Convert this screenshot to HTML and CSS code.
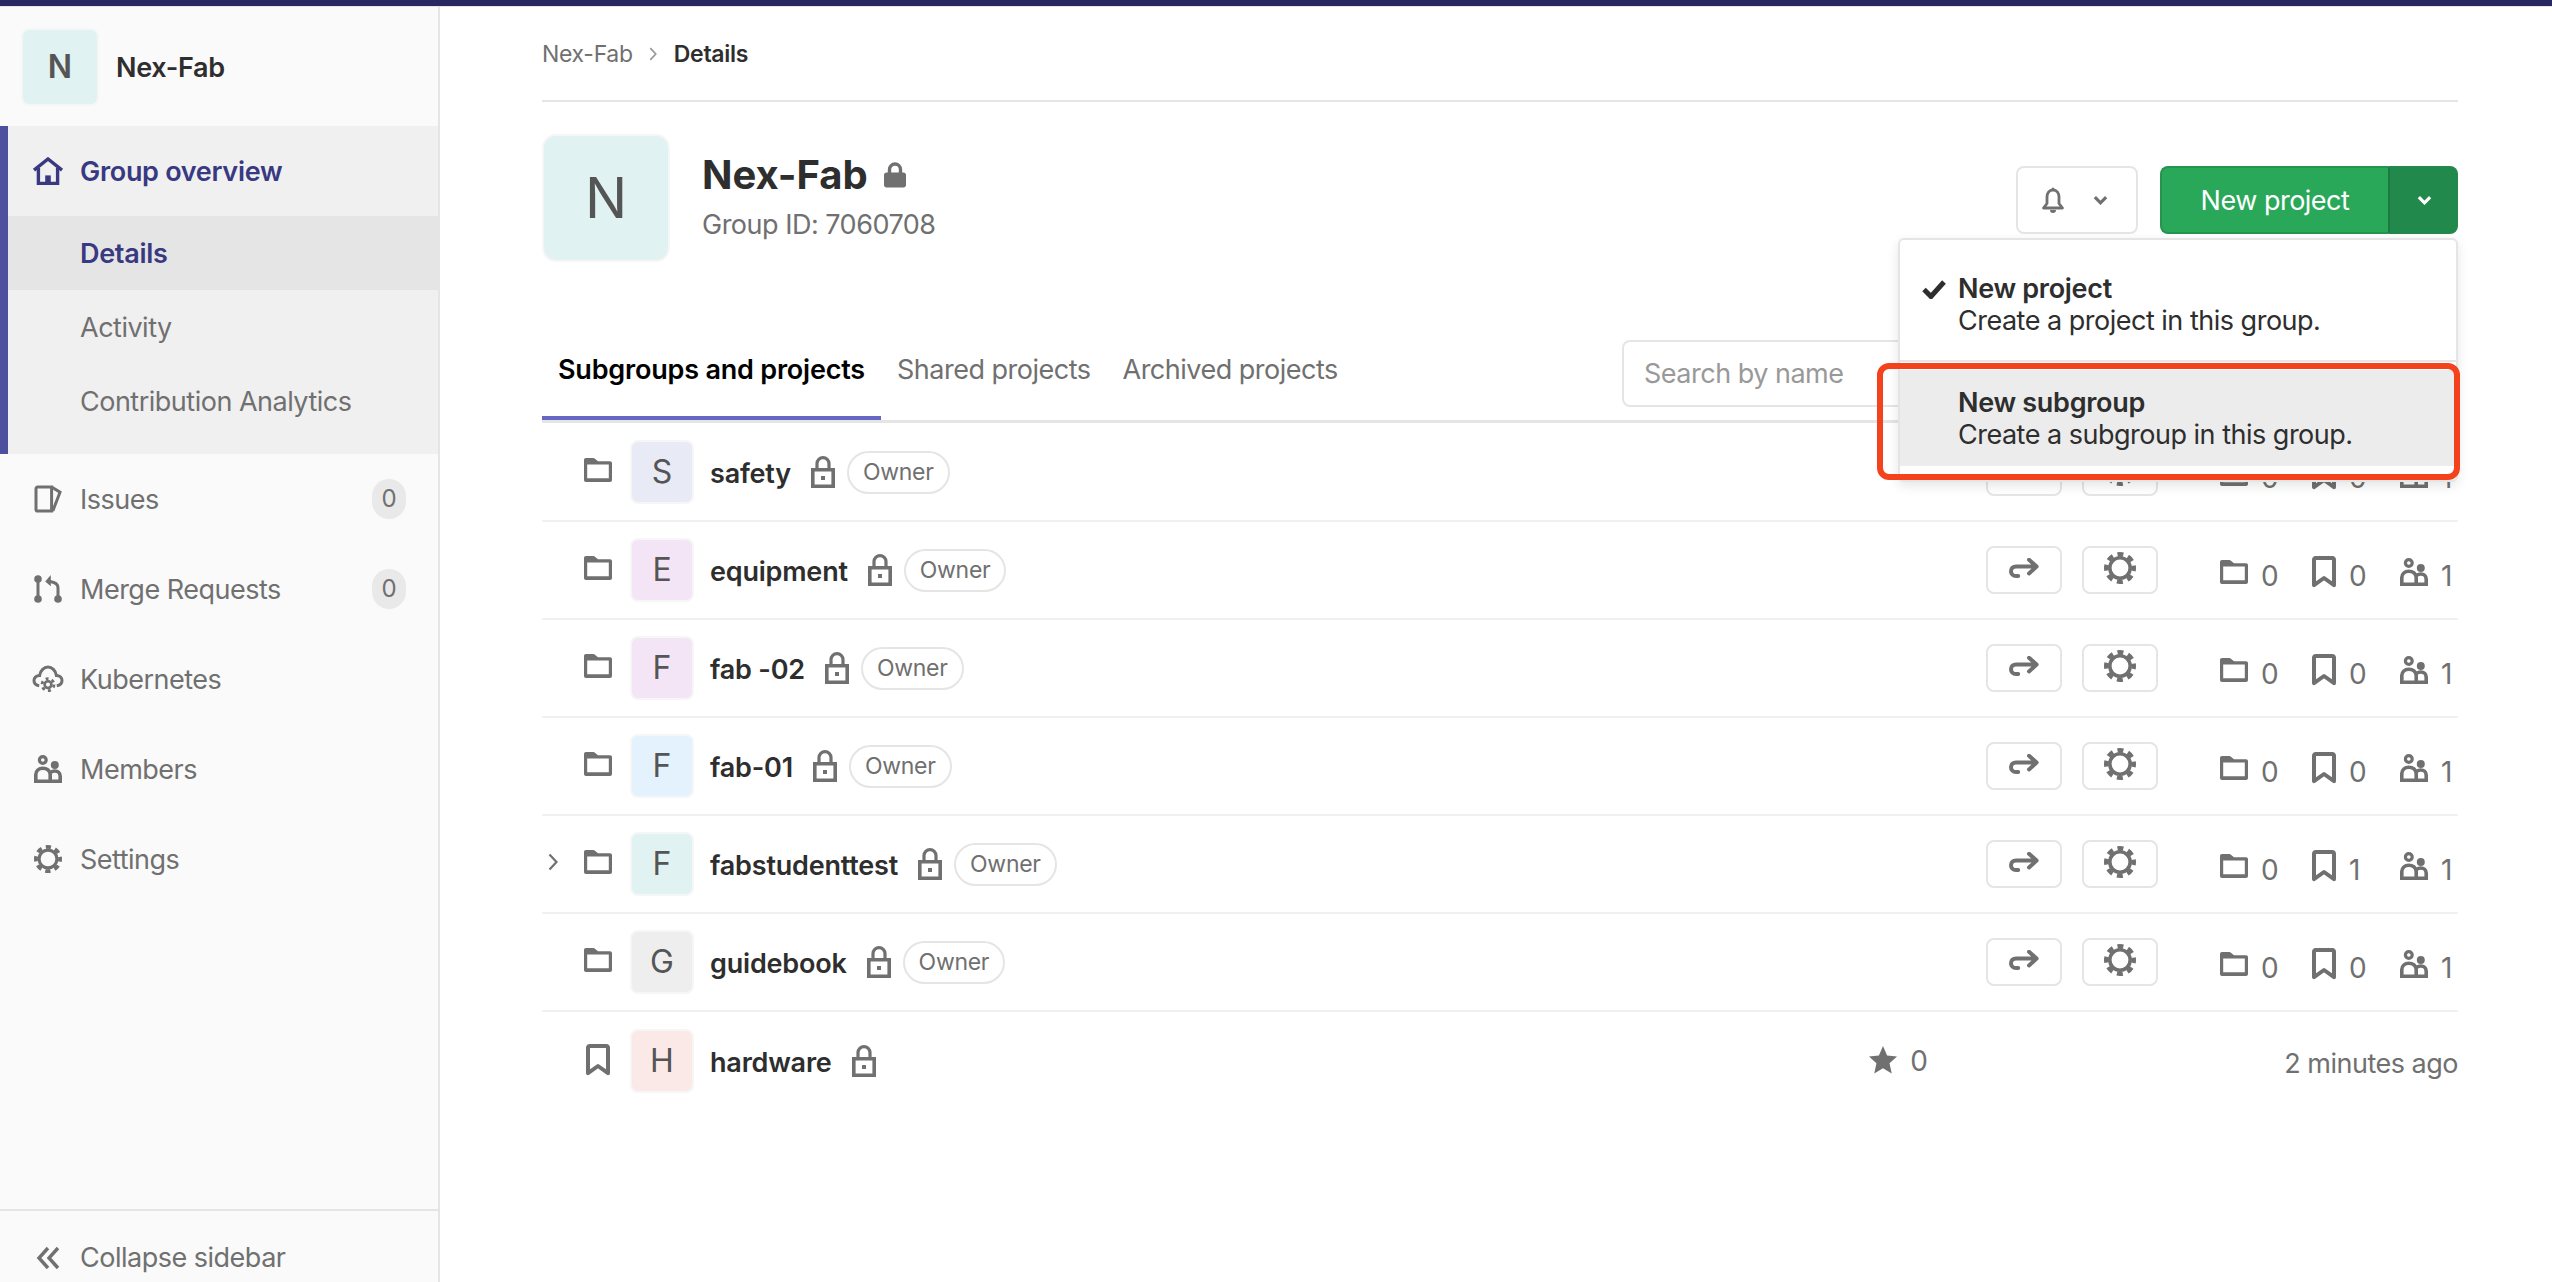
FILE: index.html
```html
<!DOCTYPE html>
<html lang="en">
<head>
  <meta charset="UTF-8">
  <meta name="viewport" content="width=device-width, initial-scale=1.0">
  <title>Nex-Fab - Details</title>
  <link rel="stylesheet" href="styles.css">
</head>
<body>
  <svg class="sprite" xmlns="http://www.w3.org/2000/svg">
    <symbol id="i-home" viewBox="0 0 16 14">
      <path d="M1 6.6 8 1l7 5.6" fill="none" stroke="currentColor" stroke-width="1.7"/>
      <path d="M3.2 5.5v7.7h9.6V5.5" fill="none" stroke="currentColor" stroke-width="1.7"/>
      <path d="M6.6 13V9.2h2.8V13z" fill="currentColor"/>
    </symbol>
    <symbol id="i-issues" viewBox="0 0 14 14">
      <path d="M1.8 1h7v12h-7a.8.8 0 0 1-.8-.8V1.8a.8.8 0 0 1 .8-.8z" fill="none" stroke="currentColor" stroke-width="1.5"/>
      <path d="M8.8 1 13 3.6 9.4 13" fill="none" stroke="currentColor" stroke-width="1.5"/>
    </symbol>
    <symbol id="i-merge" viewBox="0 0 14 14">
      <circle cx="2" cy="2" r="1.9" fill="currentColor"/>
      <circle cx="2" cy="12" r="1.9" fill="currentColor"/>
      <circle cx="12" cy="12" r="1.9" fill="currentColor"/>
      <path d="M2 2v10M12 12V6.4C12 4.6 11 3.6 8 3.2" fill="none" stroke="currentColor" stroke-width="1.5"/>
      <path d="M8.4 0 5.6 3.2l2.8 2.4z" fill="currentColor"/>
    </symbol>
    <symbol id="i-cloud" viewBox="0 0 16 14">
      <path d="M3.6 10.4C1.8 10.2 1 9 1 7.8 1 6.4 2.2 5.2 3.8 5.2 4.2 2.8 6 1 8 1s3.8 1.8 4.2 4.2c1.6 0 2.8 1.2 2.8 2.6 0 1.2-.8 2.4-2.6 2.6" fill="none" stroke="currentColor" stroke-width="1.5"/>
      <circle cx="8" cy="9.8" r="1.7" fill="none" stroke="currentColor" stroke-width="1.3"/>
      <circle cx="8" cy="9.8" r="3" fill="none" stroke="currentColor" stroke-width="1.4" stroke-dasharray="1.5 1.64"/>
    </symbol>
    <symbol id="i-users" viewBox="0 0 14 14">
      <circle cx="4.4" cy="2.5" r="1.7" fill="none" stroke="currentColor" stroke-width="1.6"/>
      <circle cx="10.4" cy="5" r="2" fill="currentColor"/>
      <path d="M.9 13.1V9.8c0-1.9 1.5-3.2 3.5-3.2s3.7 1.3 3.7 3.2v3.3z" fill="none" stroke="currentColor" stroke-width="1.8"/>
      <path d="M8 13.100h5.100V10.600c0-1.600-1.200-2.600-2.700-2.600-.9 0-1.600.3-2.200.7" fill="none" stroke="currentColor" stroke-width="1.800"/>
    </symbol>
    <symbol id="i-gear" viewBox="0 0 16 16">
      <circle cx="8" cy="8" r="5.1" fill="none" stroke="currentColor" stroke-width="1.8"/>
      <circle cx="8" cy="8" r="6.9" fill="none" stroke="currentColor" stroke-width="2.2" stroke-dasharray="3 2.42" stroke-dashoffset="1.5"/>
    </symbol>
    <symbol id="i-folder" viewBox="0 0 14 12">
      <path fill-rule="evenodd" fill="currentColor" d="M1 0h3.600c.4 0 .7.2 1 .5L7 1.600h6c.6 0 1 .4 1 1V11c0 .6-.4 1-1 1H1c-.6 0-1-.4-1-1V1c0-.6.4-1 1-1zm.6 3.200v6.900h10.800V3.200z"/>
    </symbol>
    <symbol id="i-bookmark" viewBox="0 0 12 16">
      <path d="M1.800 1h8.400c.4 0 .8.4.8.8V14.600L6 11 1 14.600V1.800c0-.4.4-.8.8-.8z" fill="none" stroke="currentColor" stroke-width="2" stroke-linejoin="round"/>
    </symbol>
    <symbol id="i-lock" viewBox="0 0 12 16">
      <path d="M3 7V3.800a3 3 0 0 1 6 0V7" fill="none" stroke="currentColor" stroke-width="1.600"/>
      <path d="M.9 6.900h10.200v8.200H.9z" fill="none" stroke="currentColor" stroke-width="1.800"/>
      <path d="M5 10h2v2H5z" fill="currentColor"/>
    </symbol>
    <symbol id="i-lock-solid" viewBox="0 0 22 26">
      <path d="M5.500 11V7.500a5.500 5.500 0 0 1 11 0V11" fill="none" stroke="currentColor" stroke-width="3.400"/>
      <path d="M2.500 10.500h17c1.400 0 2.500 1.100 2.500 2.500v10c0 1.400-1.100 2.500-2.500 2.500h-17C1.100 25.500 0 24.400 0 23V13c0-1.400 1.100-2.500 2.500-2.500z" fill="currentColor"/>
    </symbol>
    <symbol id="i-share" viewBox="0 0 15 10">
      <path d="M4.600 9H3.500C2 9 1 8 1 6.600S2 4.300 3.500 4.300H13.800M10 .9l3.800 3.400L10 7.700" fill="none" stroke="currentColor" stroke-width="2" stroke-linecap="round" stroke-linejoin="round"/>
    </symbol>
    <symbol id="i-chevron" viewBox="0 0 16 10">
      <path d="M2 2l6 6 6-6" fill="none" stroke="currentColor" stroke-width="3.400"/>
    </symbol>
    <symbol id="i-right" viewBox="0 0 10 18">
      <path d="M1.500 1.500 8.500 9l-7 7.500" fill="none" stroke="currentColor" stroke-width="2.200"/>
    </symbol>
    <symbol id="i-collapse" viewBox="0 0 24 24">
      <path d="M12 2 3 12l9 10M22 2l-9 10 9 10" fill="none" stroke="currentColor" stroke-width="3.400"/>
    </symbol>
    <symbol id="i-bell" viewBox="0 0 24 26">
      <path d="M12 3c4 0 6 3 6 7v6.500l3.500 4.500h-19L6 16.500V10c0-4 2-7 6-7z" fill="none" stroke="currentColor" stroke-width="2.800" stroke-linejoin="round"/>
      <path d="M9 23h6a3 3 0 0 1-6 0zM10.500 2a1.500 1.500 0 0 1 3 0v2h-3z" fill="currentColor"/>
    </symbol>
    <symbol id="i-check" viewBox="0 0 24 20">
      <path d="M2 10.500l7 7L22 3" fill="none" stroke="currentColor" stroke-width="5"/>
    </symbol>
    <symbol id="i-star" viewBox="0 0 24 24">
      <path d="M12 0l3.500 8.200 8.500.8-6.400 5.800 1.900 8.700L12 19l-7.500 4.500 1.900-8.700L0 9l8.500-.8z" fill="currentColor"/>
    </symbol>
  </svg>

  <div class="topbar"></div>

  <div class="page">
    <aside class="sidebar">
      <div class="side-head">
        <div class="avatar avatar-side teal">N</div>
        <span class="side-title">Nex-Fab</span>
      </div>

      <div class="side-group">
        <a class="side-link side-link-active"><svg class="side-icon home"><use href="#i-home"/></svg><span>Group overview</span></a>
        <a class="sub-link sub-link-active">Details</a>
        <a class="sub-link">Activity</a>
        <a class="sub-link">Contribution Analytics</a>
      </div>

      <a class="side-link"><svg class="side-icon"><use href="#i-issues"/></svg><span>Issues</span><span class="count">0</span></a>
      <a class="side-link"><svg class="side-icon"><use href="#i-merge"/></svg><span>Merge Requests</span><span class="count">0</span></a>
      <a class="side-link"><svg class="side-icon"><use href="#i-cloud"/></svg><span>Kubernetes</span></a>
      <a class="side-link"><svg class="side-icon"><use href="#i-users"/></svg><span>Members</span></a>
      <a class="side-link"><svg class="side-icon"><use href="#i-gear"/></svg><span>Settings</span></a>

      <a class="collapse"><svg class="collapse-icon"><use href="#i-collapse"/></svg>Collapse sidebar</a>
    </aside>

    <main class="content">
      <nav class="crumbs">
        <a>Nex-Fab</a>
        <svg class="crumb-sep"><use href="#i-right"/></svg>
        <strong>Details</strong>
      </nav>

      <header class="group-head">
        <div class="avatar avatar-big teal">N</div>
        <div class="group-info">
          <h1>Nex-Fab <svg class="group-lock"><use href="#i-lock-solid"/></svg></h1>
          <p>Group ID: 7060708</p>
        </div>
        <div class="group-actions">
          <button class="btn-bell">
            <svg class="bell"><use href="#i-bell"/></svg>
            <svg class="chev"><use href="#i-chevron"/></svg>
          </button>
          <div class="split">
            <button class="split-main">New project</button>
            <button class="split-caret"><svg class="chev"><use href="#i-chevron"/></svg></button>
          </div>

          <div class="menu">
            <div class="menu-item menu-first">
              <svg class="menu-check"><use href="#i-check"/></svg>
              <b>New project</b>
              <span>Create a project in this group.</span>
            </div>
            <div class="menu-line"></div>
            <div class="menu-item menu-hover">
              <b>New subgroup</b>
              <span>Create a subgroup in this group.</span>
            </div>
            <div class="callout"></div>
          </div>
        </div>
      </header>

      <div class="tabs">
        <a class="tab tab-active">Subgroups and projects</a>
        <a class="tab">Shared projects</a>
        <a class="tab">Archived projects</a>
        <input class="search" type="text" placeholder="Search by name">
      </div>

      <ul class="rows">
        <li class="row">
          <span class="toggle"></span>
          <svg class="kind"><use href="#i-folder"/></svg>
          <div class="avatar avatar-row indigo">S</div>
          <a class="name">safety</a>
          <svg class="lock"><use href="#i-lock"/></svg>
          <span class="role">Owner</span>
          <div class="controls">
            <button class="ctl"><svg class="ctl-share"><use href="#i-share"/></svg></button>
            <button class="ctl"><svg class="ctl-gear"><use href="#i-gear"/></svg></button>
          </div>
          <div class="stats">
            <span class="stat s1"><svg class="st-folder"><use href="#i-folder"/></svg>0</span>
            <span class="stat s2"><svg class="st-book"><use href="#i-bookmark"/></svg>0</span>
            <span class="stat s3"><svg class="st-users"><use href="#i-users"/></svg>1</span>
          </div>
        </li>
        <li class="row">
          <span class="toggle"></span>
          <svg class="kind"><use href="#i-folder"/></svg>
          <div class="avatar avatar-row purple">E</div>
          <a class="name">equipment</a>
          <svg class="lock"><use href="#i-lock"/></svg>
          <span class="role">Owner</span>
          <div class="controls">
            <button class="ctl"><svg class="ctl-share"><use href="#i-share"/></svg></button>
            <button class="ctl"><svg class="ctl-gear"><use href="#i-gear"/></svg></button>
          </div>
          <div class="stats">
            <span class="stat s1"><svg class="st-folder"><use href="#i-folder"/></svg>0</span>
            <span class="stat s2"><svg class="st-book"><use href="#i-bookmark"/></svg>0</span>
            <span class="stat s3"><svg class="st-users"><use href="#i-users"/></svg>1</span>
          </div>
        </li>
        <li class="row">
          <span class="toggle"></span>
          <svg class="kind"><use href="#i-folder"/></svg>
          <div class="avatar avatar-row purple">F</div>
          <a class="name">fab -02</a>
          <svg class="lock"><use href="#i-lock"/></svg>
          <span class="role">Owner</span>
          <div class="controls">
            <button class="ctl"><svg class="ctl-share"><use href="#i-share"/></svg></button>
            <button class="ctl"><svg class="ctl-gear"><use href="#i-gear"/></svg></button>
          </div>
          <div class="stats">
            <span class="stat s1"><svg class="st-folder"><use href="#i-folder"/></svg>0</span>
            <span class="stat s2"><svg class="st-book"><use href="#i-bookmark"/></svg>0</span>
            <span class="stat s3"><svg class="st-users"><use href="#i-users"/></svg>1</span>
          </div>
        </li>
        <li class="row">
          <span class="toggle"></span>
          <svg class="kind"><use href="#i-folder"/></svg>
          <div class="avatar avatar-row blue">F</div>
          <a class="name">fab-01</a>
          <svg class="lock"><use href="#i-lock"/></svg>
          <span class="role">Owner</span>
          <div class="controls">
            <button class="ctl"><svg class="ctl-share"><use href="#i-share"/></svg></button>
            <button class="ctl"><svg class="ctl-gear"><use href="#i-gear"/></svg></button>
          </div>
          <div class="stats">
            <span class="stat s1"><svg class="st-folder"><use href="#i-folder"/></svg>0</span>
            <span class="stat s2"><svg class="st-book"><use href="#i-bookmark"/></svg>0</span>
            <span class="stat s3"><svg class="st-users"><use href="#i-users"/></svg>1</span>
          </div>
        </li>
        <li class="row">
          <span class="toggle"><svg class="toggle-icon"><use href="#i-right"/></svg></span>
          <svg class="kind"><use href="#i-folder"/></svg>
          <div class="avatar avatar-row teal">F</div>
          <a class="name">fabstudenttest</a>
          <svg class="lock"><use href="#i-lock"/></svg>
          <span class="role">Owner</span>
          <div class="controls">
            <button class="ctl"><svg class="ctl-share"><use href="#i-share"/></svg></button>
            <button class="ctl"><svg class="ctl-gear"><use href="#i-gear"/></svg></button>
          </div>
          <div class="stats">
            <span class="stat s1"><svg class="st-folder"><use href="#i-folder"/></svg>0</span>
            <span class="stat s2"><svg class="st-book"><use href="#i-bookmark"/></svg>1</span>
            <span class="stat s3"><svg class="st-users"><use href="#i-users"/></svg>1</span>
          </div>
        </li>
        <li class="row">
          <span class="toggle"></span>
          <svg class="kind"><use href="#i-folder"/></svg>
          <div class="avatar avatar-row grey">G</div>
          <a class="name">guidebook</a>
          <svg class="lock"><use href="#i-lock"/></svg>
          <span class="role">Owner</span>
          <div class="controls">
            <button class="ctl"><svg class="ctl-share"><use href="#i-share"/></svg></button>
            <button class="ctl"><svg class="ctl-gear"><use href="#i-gear"/></svg></button>
          </div>
          <div class="stats">
            <span class="stat s1"><svg class="st-folder"><use href="#i-folder"/></svg>0</span>
            <span class="stat s2"><svg class="st-book"><use href="#i-bookmark"/></svg>0</span>
            <span class="stat s3"><svg class="st-users"><use href="#i-users"/></svg>1</span>
          </div>
        </li>
        <li class="row row-last">
          <span class="toggle"></span>
          <svg class="kind kind-book"><use href="#i-bookmark"/></svg>
          <div class="avatar avatar-row rose">H</div>
          <a class="name">hardware</a>
          <svg class="lock"><use href="#i-lock"/></svg>
          <div class="project-meta">
            <span class="stars"><svg class="star"><use href="#i-star"/></svg>0</span>
            <span class="updated">2 minutes ago</span>
          </div>
        </li>
      </ul>
    </main>
  </div>
</body>
</html>
```

FILE: styles.css
```css
* {
  box-sizing: border-box;
}

html,
body {
  height: 100%;
}

body {
  margin: 0;
  overflow: hidden;
  background: #fff;
  color: #2e2e2e;
  font-family: Inter, "Liberation Sans", sans-serif;
  font-size: 27px;
  letter-spacing: -0.5px;
  line-height: 32px;
}

.sprite {
  display: none;
}

svg {
  display: block;
  flex: none;
}

.topbar {
  height: 7px;
  background: #292961;
  border-bottom: 1px solid #e5e5e5;
}

.page {
  display: flex;
  height: 1275px;
}

/* avatars */
.avatar {
  display: flex;
  flex: none;
  align-items: center;
  justify-content: center;
  border: 2px solid #f6f6f6;
  color: #555;
  letter-spacing: 0;
}

.avatar-side {
  width: 78px;
  height: 78px;
  border-radius: 8px;
  font-size: 32px;
  font-weight: 600;
}

.avatar-big {
  width: 128px;
  height: 128px;
  border-radius: 14px;
  font-size: 56px;
}

.avatar-row {
  width: 64px;
  height: 64px;
  border-radius: 8px;
  font-size: 32px;
}

.teal { background: #e0f2f1; }
.indigo { background: #e8eaf6; }
.purple { background: #f3e5f5; }
.blue { background: #e3f2fd; }
.grey { background: #eee; }
.rose { background: #fbe9e7; }

/* sidebar */
.sidebar {
  display: flex;
  flex: none;
  flex-direction: column;
  width: 440px;
  background: #fafafa;
  border-right: 2px solid #e5e5e5;
  color: #707070;
}

.side-head {
  display: flex;
  align-items: center;
  gap: 17px;
  height: 119px;
  padding: 0 0 0 21px;
}

.side-title {
  padding-top: 2px;
  color: #2e2e2e;
  font-weight: 600;
  letter-spacing: -0.3px;
}

.side-group {
  padding-bottom: 16px;
  background: #f0f0f0;
  border-left: 8px solid #4f4f9f;
}

.side-link {
  display: flex;
  align-items: center;
  height: 90px;
  padding: 0 32px;
}

.side-link span:first-of-type {
  padding-top: 2px;
}

.side-group .side-link {
  padding-left: 24px;
}

.side-link-active {
  color: #393982;
  font-weight: 600;
  letter-spacing: -0.3px;
}

.side-icon {
  width: 32px;
  height: 28px;
  margin-right: 16px;
}

.sub-link {
  display: flex;
  align-items: center;
  height: 74px;
  padding: 2px 0 0 72px;
}

.sub-link-active {
  background: #e5e5e5;
  color: #393982;
  font-weight: 600;
  letter-spacing: -0.3px;
}

.side-link .count {
  width: 34px;
  height: 40px;
  margin-left: auto;
  padding: 0;
  border-radius: 17px;
  background: #e9e9e9;
  font-size: 24px;
  letter-spacing: 0;
  line-height: 40px;
  text-align: center;
}

.collapse {
  display: flex;
  align-items: center;
  height: 73px;
  margin-top: auto;
  padding: 22px 0 0 36px;
  border-top: 2px solid #e5e5e5;
}

.collapse-icon {
  width: 24px;
  height: 24px;
  margin-right: 20px;
}

/* main column */
.content {
  flex: 1;
  min-width: 0;
  padding: 0 94px 0 102px;
}

.crumbs {
  display: flex;
  align-items: center;
  height: 95px;
  border-bottom: 2px solid #e5e5e5;
  color: #707070;
  font-size: 23px;
  letter-spacing: -0.3px;
}

.crumbs strong {
  color: #2e2e2e;
  font-weight: 600;
}

.crumb-sep {
  width: 8px;
  height: 14px;
  margin: 0 17px 0 16px;
  color: #999;
}

.group-head {
  display: flex;
  height: 160px;
  margin-top: 32px;
}

.group-info {
  margin-left: 32px;
  padding-top: 17px;
}

.group-info h1 {
  display: flex;
  align-items: center;
  gap: 16px;
  margin: 0;
  font-size: 40px;
  font-weight: 700;
  letter-spacing: 0;
  line-height: 48px;
}

.group-lock {
  width: 22px;
  height: 26px;
  color: #707070;
}

.group-info p {
  margin: 10px 0 0;
  color: #707070;
}

.group-actions {
  position: relative;
  display: flex;
  gap: 22px;
  margin-left: auto;
  padding-top: 32px;
}

button {
  font-family: inherit;
  font-size: 27px;
  letter-spacing: -0.5px;
  cursor: pointer;
}

.btn-bell {
  display: flex;
  align-items: center;
  width: 122px;
  height: 68px;
  padding: 0 0 0 23px;
  background: #fff;
  border: 2px solid #e5e5e5;
  border-radius: 8px;
  color: #707070;
}

.bell {
  width: 24px;
  height: 26px;
  margin-right: 28px;
}

.chev {
  width: 15px;
  height: 10px;
}

.split {
  display: flex;
  height: 68px;
}

.split-main {
  width: 228px;
  background: #2aa85a;
  border: 2px solid #24944f;
  border-right: 0;
  border-radius: 8px 0 0 8px;
  color: #fff;
}

.split-caret {
  display: flex;
  align-items: center;
  justify-content: center;
  width: 70px;
  padding: 0 0 0 2px;
  background: #21894b;
  border: 2px solid #21894b;
  border-left-color: #1b7a41;
  border-radius: 0 8px 8px 0;
  color: #fff;
}

.menu {
  position: absolute;
  top: 104px;
  right: 0;
  z-index: 10;
  width: 560px;
  height: 244px;
  padding-top: 8px;
  background: #fff;
  border: 2px solid #e5e5e5;
  border-radius: 6px;
  box-shadow: 0 4px 12px rgba(0, 0, 0, 0.1);
}

.menu-item {
  position: relative;
  display: flex;
  flex-direction: column;
  padding: 25px 8px 23px 58px;
}

.menu-first {
  height: 112px;
}

.menu-item b {
  font-weight: 600;
  letter-spacing: -0.3px;
}

.menu-line {
  height: 2px;
  margin-bottom: 8px;
  background: #e5e5e5;
}

.menu-hover {
  height: 96px;
  padding-top: 17px;
  padding-bottom: 15px;
  background: #ececec;
}

.menu-check {
  position: absolute;
  top: 31px;
  left: 22px;
  width: 24px;
  height: 20px;
  color: #2e2e2e;
}

.callout {
  position: absolute;
  top: 123px;
  left: -23px;
  width: 583px;
  height: 117px;
  border: 6px solid #f4421d;
  border-radius: 12px;
  pointer-events: none;
}

/* tabs */
.tabs {
  display: flex;
  align-items: flex-end;
  height: 107px;
  margin-top: 22px;
  border-bottom: 3px solid #e5e5e5;
}

.tab {
  height: 96px;
  padding: 30px 16px 0;
  border-bottom: 4px solid transparent;
  color: #707070;
}

.tab-active {
  border-bottom-color: #6666c4;
  color: #000;
  font-weight: 600;
  letter-spacing: -0.2px;
}

.search {
  width: 500px;
  height: 67px;
  margin: 0 336px 13px auto;
  padding: 0 20px;
  border: 2px solid #e5e5e5;
  border-radius: 8px;
  font-family: inherit;
  font-size: 27px;
  letter-spacing: -0.5px;
}

.search::placeholder {
  color: #999;
}

/* list */
.rows {
  margin: 1px 0 0;
  padding: 0;
  list-style: none;
}

.row {
  display: flex;
  align-items: center;
  height: 98px;
  border-bottom: 2px solid #f0f0f0;
  color: #707070;
}

.row-last {
  border-bottom: 0;
}

.toggle {
  flex: none;
  width: 42px;
  padding-left: 6px;
}

.toggle-icon {
  width: 10px;
  height: 18px;
  margin-top: -4px;
}

.kind {
  width: 28px;
  height: 24px;
  margin: -5px 18px 0 0;
}

.kind-book {
  width: 24px;
  height: 32px;
  margin: -3px 20px 0 2px;
}

.name {
  margin: 4px 0 0 16px;
  color: #2e2e2e;
  font-weight: 600;
  letter-spacing: -0.2px;
}

.lock {
  width: 24px;
  height: 32px;
  margin-left: 20px;
}

.role {
  height: 43px;
  margin-left: 12px;
  padding: 0 14px;
  border: 2px solid #e5e5e5;
  border-radius: 22px;
  font-size: 23px;
  letter-spacing: -0.3px;
  line-height: 38px;
}

.controls {
  display: flex;
  gap: 20px;
  margin-left: auto;
}

.ctl {
  display: flex;
  align-items: center;
  justify-content: center;
  width: 76px;
  height: 48px;
  padding: 0 0 4px;
  background: #fff;
  border: 2px solid #e5e5e5;
  border-radius: 8px;
  color: #707070;
}

.ctl-share {
  width: 30px;
  height: 20px;
}

.ctl-gear {
  width: 32px;
  height: 32px;
  overflow: visible;
}

.stats {
  display: flex;
  margin: 0 0 0 62px;
}

.stat {
  display: flex;
  align-items: center;
  gap: 13px;
  padding-top: 12px;
  font-size: 28px;
  letter-spacing: 0;
  line-height: 32px;
}

.stat svg {
  margin-top: -8px;
}

.s1 { width: 92px; }
.s2 { width: 88px; }
.s3 { width: 58px; }

.st-folder {
  width: 28px;
  height: 24px;
}

.st-book {
  width: 24px;
  height: 32px;
}

.st-users {
  width: 28px;
  height: 28px;
}

.project-meta {
  display: flex;
  align-items: center;
  margin-left: auto;
}

.stars {
  display: flex;
  align-items: center;
  gap: 13px;
  font-size: 28px;
  letter-spacing: 0;
}

.star {
  width: 28px;
  height: 28px;
  margin-top: -2px;
}

.updated {
  width: 530px;
  padding-top: 6px;
  text-align: right;
}
```
